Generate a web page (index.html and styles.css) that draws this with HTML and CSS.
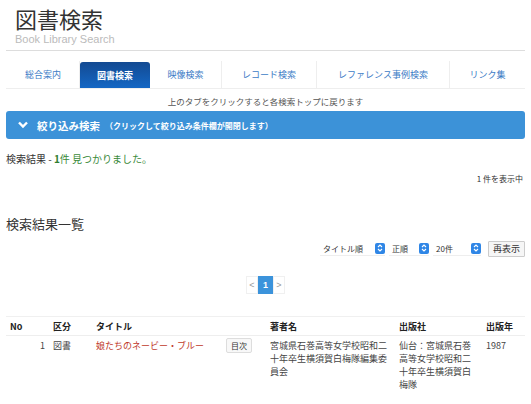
FILE: index.html
```html
<!DOCTYPE html>
<html lang="ja">
<head>
<meta charset="utf-8">
<title>図書検索</title>
<link rel="stylesheet" href="styles.css">
</head>
<body>
<div class="page">
  <header class="head">
    <h1 class="title">図書検索</h1>
    <div class="subtitle">Book Library Search</div>
  </header>
  <nav class="tabs">
    <a class="tab t1">総合案内</a>
    <a class="tab t2 active">図書検索</a>
    <a class="tab t3">映像検索</a>
    <a class="tab t4">レコード検索</a>
    <a class="tab t5">レファレンス事例検索</a>
    <a class="tab t6">リンク集</a>
  </nav>
  <p class="hint">上のタブをクリックすると各検索トップに戻ります</p>
  <div class="filter">
    <svg class="chev" width="10" height="8" viewBox="0 0 10 8"><path d="M1 1.5 L5 5.5 L9 1.5" fill="none" stroke="#fff" stroke-width="2.4"/></svg>
    <span class="filter-main">絞り込み検索</span>
    <span class="filter-sub">（クリックして絞り込み条件欄が開閉します）</span>
  </div>
  <p class="found">検索結果 - <b class="green">1</b><span class="green">件 見つかりました。</span></p>
  <p class="showing">1&nbsp;件を表示中</p>
  <h2 class="list-title">検索結果一覧</h2>
  <div class="controls">
    <span class="sel w1">タイトル順<span class="arrow"><svg width="8" height="10" viewBox="0 0 8 10"><path d="M2 4 L4 2 L6 4 M2 6 L4 8 L6 6" fill="none" stroke="#fff" stroke-width="1.1"/></svg></span></span>
    <span class="sel w2">正順<span class="arrow"><svg width="8" height="10" viewBox="0 0 8 10"><path d="M2 4 L4 2 L6 4 M2 6 L4 8 L6 6" fill="none" stroke="#fff" stroke-width="1.1"/></svg></span></span>
    <span class="sel w3">20件<span class="arrow"><svg width="8" height="10" viewBox="0 0 8 10"><path d="M2 4 L4 2 L6 4 M2 6 L4 8 L6 6" fill="none" stroke="#fff" stroke-width="1.1"/></svg></span></span>
    <button class="redisplay">再表示</button>
  </div>
  <div class="pager">
    <span class="pg">&lt;</span><span class="pg cur">1</span><span class="pg">&gt;</span>
  </div>
  <table class="results">
    <thead>
      <tr><th class="c-no">No</th><th class="c-kind">区分</th><th class="c-title">タイトル</th><th class="c-author">著者名</th><th class="c-pub">出版社</th><th class="c-year">出版年</th></tr>
    </thead>
    <tbody>
      <tr>
        <td class="c-no num">1</td>
        <td class="c-kind">図書</td>
        <td class="c-title"><div class="title-cell"><a class="book">娘たちのネービー・ブルー</a><button class="toc">目次</button></div></td>
        <td class="c-author"><div class="author-txt">宮城県石巻高等女学校昭和二十年卒生横須賀白梅隊編集委員会</div></td>
        <td class="c-pub"><div class="pub-txt">仙台：宮城県石巻高等女学校昭和二十年卒生横須賀白梅隊</div></td>
        <td class="c-year">1987</td>
      </tr>
    </tbody>
  </table>
</div>
</body>
</html>
```

FILE: styles.css
```css
* { box-sizing: border-box; }
html, body { margin: 0; padding: 0; background: #fff; }
body {
  font-family: "Noto Sans CJK JP", "Noto Sans", sans-serif;
  color: #333;
}
.page { padding: 0 6px; width: 531px; }
.head { border-bottom: 1px solid #ddd; padding: 6px 0 0 9px; height: 51px; }
.title { margin: 0; font-size: 22px; font-weight: 400; line-height: 25px; color: #333; }
.subtitle { font-family: "Liberation Sans", sans-serif; font-size: 11px; color: #bbb; line-height: 13px; margin-top: 2px; }

.tabs {
  display: flex;
  margin-top: 10px;
  height: 28px;
  border-bottom: 1px solid #eee;
  padding-left: 1px;
}
.tab {
  display: flex; align-items: center; justify-content: center;
  font-size: 9px; color: #3d7cc6;
  border-right: 1px solid #eee;
  text-decoration: none;
}
.t1 { width: 73px; }
.t2 { width: 70px; }
.t3 { width: 72px; }
.t4 { width: 95px; }
.t5 { width: 133px; }
.t6 { width: 75px; border-right: 0; }
.tab.active {
  background: linear-gradient(#134a92, #1467c4);
  color: #fff; font-weight: 700;
  border-radius: 3px 3px 0 0;
  border-right: 0;
  margin-top: 1px;
}

.hint { margin: 6px 0 0; text-align: center; font-size: 8.5px; color: #555; line-height: 12px; }
.filter {
  margin-top: 4px;
  height: 28px;
  background: #3c92d8;
  border-radius: 3px;
  display: flex; align-items: center;
  padding-left: 12px;
  color: #fff; font-weight: 700;
}
.chev { margin-right: 9px; }
.filter-main { font-size: 10.5px; }
.filter-sub { font-size: 8px; margin-left: 5px; }

.found { margin: 13px 0 0; font-size: 10px; line-height: 14px; color: #333; }
.green { color: #3a8a3a; }
b.green { font-weight: 700; color: #2f7d2f; }
.showing { margin: 7px 2px 0 0; text-align: right; font-size: 8px; color: #333; line-height: 12px; }

.list-title { margin: 30px 0 0; font-size: 13px; font-weight: 400; line-height: 18px; color: #333; }
.controls { display: flex; justify-content: flex-end; align-items: center; gap: 4px; margin-top: 7px; height: 17px; }
.sel {
  display: flex; align-items: center; justify-content: space-between;
  height: 14px; font-size: 8px; color: #333; background: #fff;
  padding-left: 3px;
  border-bottom: 1px solid #eee;
}
.w1 { width: 65px; }
.w2 { width: 40px; }
.w3 { width: 48px; }
.arrow {
  width: 10px; height: 11px; background: #2f86e6; border-radius: 2px;
  display: flex; align-items: center; justify-content: center;
}
.redisplay {
  margin-left: 3px;
  font-family: inherit; font-size: 9px; color: #333;
  height: 16px; width: 37px; padding: 0;
  background: #f6f6f6; border: 1px solid #ccc; border-radius: 1px;
}

.pager { display: flex; justify-content: center; margin-top: 19px; }
.pg {
  display: flex; align-items: center; justify-content: center;
  width: 12px; height: 18px; font-size: 9px; color: #999;
  border: 1px solid #f0f0f0;
  font-family: "Liberation Sans", sans-serif;
}
.pg.cur { background: #3b93db; color: #fff; width: 15px; font-weight: 700; border-color: #3b93db; }

.results { width: 519px; border-collapse: collapse; margin-top: 22px; font-size: 9px; }
.results th {
  text-align: left; font-weight: 700; color: #222; font-size: 9px;
  height: 19px; padding: 0 4px;
  border-top: 1px solid #f0f0f0; border-bottom: 1px solid #eee;
}
.results td { vertical-align: top; padding: 3px 4px; line-height: 13px; color: #444; }
.c-no { width: 43px; }
.c-kind { width: 43px; }
.c-title { width: 174px; }
.c-author { width: 129px; }
.c-pub { width: 87px; }
.c-year { width: 43px; }
.results td.num { text-align: right; padding-right: 4px; }
th.c-no { padding-left: 4px; }
.title-cell { display: flex; align-items: flex-start; }
.book { color: #c0392b; text-decoration: none; width: 130px; }
.toc {
  font-family: inherit; font-size: 8px; color: #333;
  height: 15px; width: 26px; padding: 0;
  background: #f8f8f8; border: 1px solid #ddd; border-radius: 2px;
  margin-top: -1px;
}
.author-txt { width: 118px; }
.pub-txt { width: 74px; }
```
